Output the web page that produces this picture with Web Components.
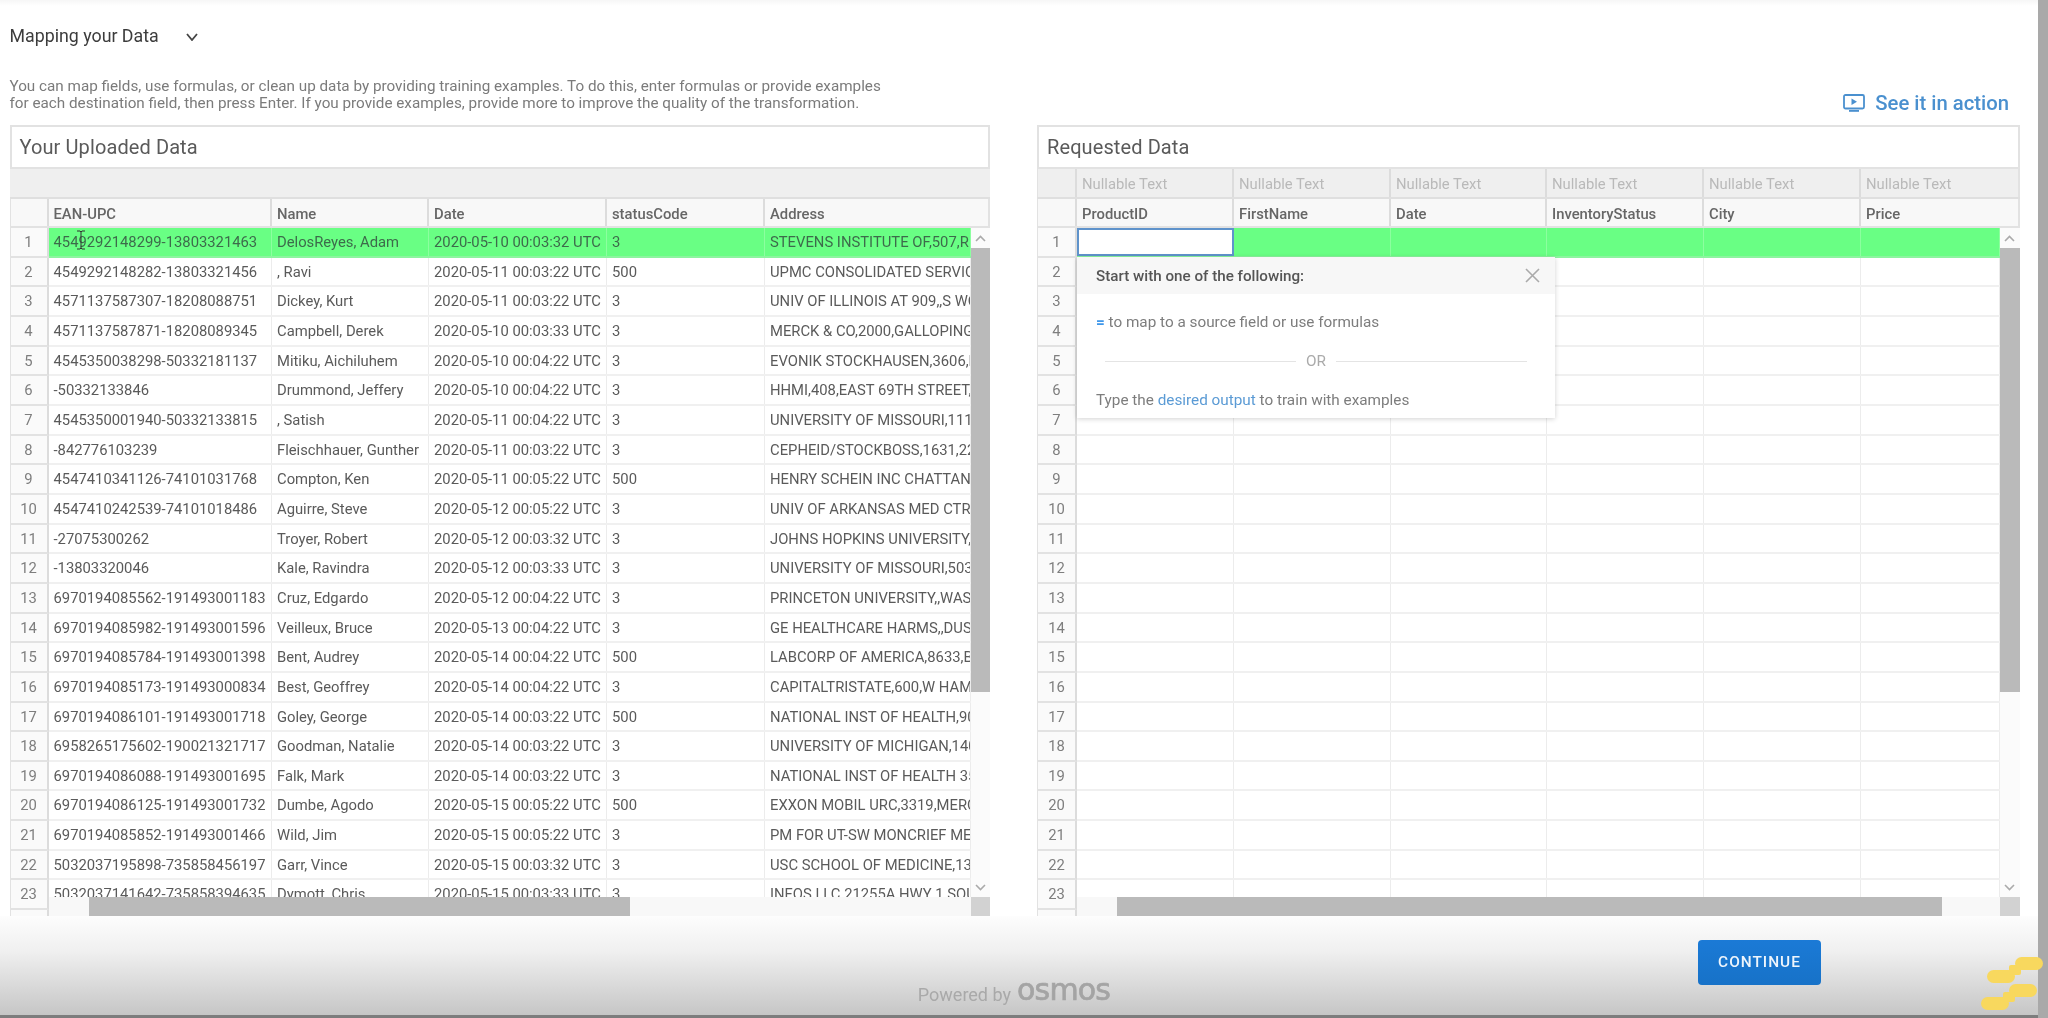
<!DOCTYPE html>
<html><head><meta charset="utf-8"><title>Mapping your Data</title>
<style>
html,body{margin:0;padding:0;background:#fff;font-family:Roboto,"Liberation Sans",sans-serif;overflow:hidden}
</style></head><body>
<x-app>
  <x-page-head slot="head"></x-page-head>
  <x-grid title-text="Your Uploaded Data" source="uploaded" slot="left"></x-grid>
  <x-grid title-text="Requested Data" source="requested" slot="right"><x-hint></x-hint></x-grid>
  <x-foot slot="foot"></x-foot>
</x-app>
<script>
const UPLOADED={
 head:["EAN-UPC","Name","Date","statusCode","Address"],
 widths:[223.5,157,178,158,0],
 num:39,bar:19,thumbV:444,thumbH:[40,541],
 rows:[
 ["4549292148299-13803321463","DelosReyes, Adam","2020-05-10 00:03:32 UTC","3","STEVENS INSTITUTE OF,507,R"],
 ["4549292148282-13803321456",", Ravi","2020-05-11 00:03:22 UTC","500","UPMC CONSOLIDATED SERVICES"],
 ["4571137587307-18208088751","Dickey, Kurt","2020-05-11 00:03:22 UTC","3","UNIV OF ILLINOIS AT 909,,S WOOD"],
 ["4571137587871-18208089345","Campbell, Derek","2020-05-10 00:03:33 UTC","3","MERCK & CO,2000,GALLOPING"],
 ["4545350038298-50332181137","Mitiku, Aichiluhem","2020-05-10 00:04:22 UTC","3","EVONIK STOCKHAUSEN,3606,HWY"],
 ["-50332133846","Drummond, Jeffery","2020-05-10 00:04:22 UTC","3","HHMI,408,EAST 69TH STREET,NY"],
 ["4545350001940-50332133815",", Satish","2020-05-11 00:04:22 UTC","3","UNIVERSITY OF MISSOURI,1111"],
 ["-842776103239","Fleischhauer, Gunther","2020-05-11 00:03:22 UTC","3","CEPHEID/STOCKBOSS,1631,22ND"],
 ["4547410341126-74101031768","Compton, Ken","2020-05-11 00:05:22 UTC","500","HENRY SCHEIN INC CHATTAN"],
 ["4547410242539-74101018486","Aguirre, Steve","2020-05-12 00:05:22 UTC","3","UNIV OF ARKANSAS MED CTR"],
 ["-27075300262","Troyer, Robert","2020-05-12 00:03:32 UTC","3","JOHNS HOPKINS UNIVERSITY,"],
 ["-13803320046","Kale, Ravindra","2020-05-12 00:03:33 UTC","3","UNIVERSITY OF MISSOURI,503"],
 ["6970194085562-191493001183","Cruz, Edgardo","2020-05-12 00:04:22 UTC","3","PRINCETON UNIVERSITY,,WAS"],
 ["6970194085982-191493001596","Veilleux, Bruce","2020-05-13 00:04:22 UTC","3","GE HEALTHCARE HARMS,,DUS"],
 ["6970194085784-191493001398","Bent, Audrey","2020-05-14 00:04:22 UTC","500","LABCORP OF AMERICA,8633,BY"],
 ["6970194085173-191493000834","Best, Geoffrey","2020-05-14 00:04:22 UTC","3","CAPITALTRISTATE,600,W HAM"],
 ["6970194086101-191493001718","Goley, George","2020-05-14 00:03:22 UTC","500","NATIONAL INST OF HEALTH,900"],
 ["6958265175602-190021321717","Goodman, Natalie","2020-05-14 00:03:22 UTC","3","UNIVERSITY OF MICHIGAN,1400"],
 ["6970194086088-191493001695","Falk, Mark","2020-05-14 00:03:22 UTC","3","NATIONAL INST OF HEALTH 35"],
 ["6970194086125-191493001732","Dumbe, Agodo","2020-05-15 00:05:22 UTC","500","EXXON MOBIL URC,3319,MERCK"],
 ["6970194085852-191493001466","Wild, Jim","2020-05-15 00:05:22 UTC","3","PM FOR UT-SW MONCRIEF ME"],
 ["5032037195898-735858456197","Garr, Vince","2020-05-15 00:03:32 UTC","3","USC SCHOOL OF MEDICINE,13"],
 ["5032037141642-735858394635","Dymott, Chris","2020-05-15 00:03:33 UTC","3","INFOS LLC 21255A HWY 1 SOUTH"],
 ["","","","",""]
 ]
};
const REQUESTED={
 types:["Nullable Text","Nullable Text","Nullable Text","Nullable Text","Nullable Text","Nullable Text"],
 head:["ProductID","FirstName","Date","InventoryStatus","City","Price"],
 widths:[157,157,156,157,157,0],
 num:40,bar:20,thumbV:444,thumbH:[40,825],active:0,
 rows:Array.from({length:24},()=>["","","","","",""])
};
const SOURCES={uploaded:UPLOADED,requested:REQUESTED};
const esc=s=>s.replace(/&/g,"&amp;").replace(/</g,"&lt;");

customElements.define("x-app",class extends HTMLElement{
 constructor(){super();this.attachShadow({mode:"open"}).innerHTML=`<style>
 :host{display:grid;grid-template-columns:2038px 10px;grid-template-rows:1015px 3px;width:2048px;height:1018px;overflow:hidden;filter:blur(.45px)}
 .main{display:flex;flex-direction:column;background:#fff;min-height:0;position:relative}
 .top{position:absolute;left:0;right:0;top:0;height:6px;background:linear-gradient(#f6f6f6,#fff)}
 .panels{display:flex;gap:47px;padding:0 18.500px 0 9.500px;height:791px}
 .panels ::slotted([slot=left]){flex:0 0 980.500px;min-width:0}
 .panels ::slotted([slot=right]){flex:1 1 0;min-width:0}
 .strip{background:#a9a9a9;grid-row:1/3;grid-column:2}
 .bot{background:#7d7d7d}
 </style>
 <div class="main"><div class="top"></div><slot name="head"></slot>
 <div class="panels"><slot name="left"></slot><slot name="right"></slot></div>
 <slot name="foot"></slot></div><div class="strip"></div><div class="bot"></div>`}
});

customElements.define("x-page-head",class extends HTMLElement{
 constructor(){super();this.attachShadow({mode:"open"}).innerHTML=`<style>
 :host{display:block;height:125px;padding:0 29px 0 9.500px;box-sizing:border-box}
 h1{margin:0;padding-top:25px;font:400 17.800px/22px Roboto,sans-serif;color:#3c3c3c;display:flex;align-items:center;gap:27px;height:47px;box-sizing:border-box}
 h1 svg{display:block;margin-top:2px}
 .row{display:flex;justify-content:space-between;align-items:flex-end;margin-top:31px}
 p{margin:0;font:400 15.250px/17px Roboto,sans-serif;color:#7b7b7b}
 a{display:flex;align-items:center;gap:10px;color:#4a90cf;font:500 20.300px/22px Roboto,sans-serif;text-decoration:none;margin-bottom:-2px}
 </style>
 <h1><span>Mapping your Data</span><svg width="12" height="8" viewBox="0 0 12 8"><polyline points="1,1 6,7 11,1" fill="none" stroke="#444" stroke-width="1.8"/></svg></h1>
 <div class="row"><p>You can map fields, use formulas, or clean up data by providing training examples. To do this, enter formulas or provide examples<br>for each destination field, then press Enter. If you provide examples, provide more to improve the quality of the transformation.</p>
 <a href="#"><svg width="22" height="18" viewBox="0 0 22 18"><rect x="1" y="1" width="20" height="13.5" rx="1.5" fill="none" stroke="#4a90cf" stroke-width="1.8"/><path d="M8.5 4.5v6.5l5.5-3.2z" fill="#4a90cf"/><rect x="6" y="16" width="10" height="1.8" fill="#4a90cf"/></svg><span>See it in action</span></a></div>`}
});

customElements.define("x-grid",class extends HTMLElement{
 connectedCallback(){
  if(this.shadowRoot)return;
  const d=SOURCES[this.getAttribute("source")];
  const cols=d.widths.map(w=>w?`flex:0 0 ${w}px;width:${w}px`:"flex:1 1 0;min-width:0");
  const cells=(arr,cls)=>arr.map((t,i)=>`<div class="c ${cls||""}" style="${cols[i]}">${esc(t)}</div>`).join("");
  const band=d.types?`<div class="hr band"><div class="n"></div>${cells(d.types,"ty")}</div>`:`<div class="hr band"></div>`;
  const nums=d.rows.map((_,i)=>`<div class="rn">${i+1}</div>`).join("");
  const rows=d.rows.map((r,i)=>`<div class="r ${i==0?"sel":""}">${r.map((t,j)=>`<div class="c ${i==0&&j===d.active?"act":""}" style="${cols[j]}">${esc(t)}</div>`).join("")}</div>`).join("");
  const up=`<svg width="11" height="7" viewBox="0 0 11 7"><polyline points="1,6 5.5,1.5 10,6" fill="none" stroke="#aaa" stroke-width="1.6"/></svg>`;
  const dn=`<svg width="11" height="7" viewBox="0 0 11 7"><polyline points="1,1 5.5,5.5 10,1" fill="none" stroke="#aaa" stroke-width="1.6"/></svg>`;
  this.attachShadow({mode:"open"}).innerHTML=`<style>
  :host{display:flex;flex-direction:column;position:relative;font:400 14.8px/20px Roboto,sans-serif;color:#5a5a5a}
  .t{flex:0 0 44px;box-sizing:border-box;border:2px solid #e2e2e2;background:#fff;font-size:20px;padding-top:1px;line-height:39px;padding-left:8px;color:#5a5a5a;letter-spacing:.1px}
  .hr{display:flex;flex:0 0 auto;box-sizing:border-box}
  .band{height:30px;background:#efefef;border-bottom:2px solid #dfdfdf;color:#b9b9b9}
  .hd{height:29px;background:#f8f8f8;border-bottom:2px solid #e2e2e2;font-weight:500;color:#666}
  .n{flex:0 0 ${d.num}px;box-sizing:border-box;border-left:1px solid #e2e2e2;border-right:2px solid #dcdcdc}
  .hr .c{border-right:2px solid #dcdcdc}
  .band .c{padding-top:3px;line-height:25px}
  .hd .c{padding-top:3px;line-height:24px}
  .hr .c:last-child{border-right:2px solid #e2e2e2}
  .c{box-sizing:border-box;padding:2px 0 0 5px;white-space:nowrap;overflow:hidden;border-right:1px solid #ececec;line-height:25.600px}
  .body{flex:1 1 0;min-height:0;display:grid;grid-template-columns:${d.num}px 1fr ${d.bar}px;grid-template-rows:1fr 19px}
  .nums{grid-row:1/3;overflow:hidden;background:#fafafa}
  .rn{height:29.66px;box-sizing:border-box;text-align:center;padding-top:2px;line-height:25.600px;color:#7e7e7e;border-left:1px solid #e2e2e2;border-right:2px solid #dcdcdc;border-bottom:2px solid #e2e2e2}
  .pane{overflow:hidden;background:#fff;min-width:0}
  .r{display:flex;height:29.66px;box-sizing:border-box;border-bottom:2px solid #f0f0f0}
  .sel{background:#69ff84;color:#3d6b4b;border-bottom-color:#8cf59f}
  .sel .c{border-right-color:#8cff9f}
  .act{background:#fff;box-shadow:inset 0 0 0 2px #5f93cb;border-right:0}
  .v{background:#fbfbfb;display:flex;flex-direction:column;align-items:center}
  .v .a{flex:0 0 20px;display:flex;align-items:center;justify-content:center;width:100%}
  .v .th{flex:0 0 ${d.thumbV}px;width:100%;background:#bababa}
  .v .sp{flex:1}
  .h{background:#f8f8f8;padding-left:${d.thumbH[0]}px}
  .h div{width:${d.thumbH[1]}px;height:100%;background:#bababa}
  .k{background:#d2d2d2}
  .ov{position:absolute;left:${d.num}px;top:132px}
  .cur{position:absolute;left:66px;top:105px}
  </style>
  <div class="t">${esc(this.getAttribute("title-text"))}</div>
  ${band}
  <div class="hr hd"><div class="n"></div>${cells(d.head)}</div>
  <div class="body"><div class="nums">${nums}</div><div class="pane">${rows}</div>
  <div class="v"><div class="a">${up}</div><div class="th"></div><div class="sp"></div><div class="a">${dn}</div></div>
  <div class="h"><div></div></div><div class="k"></div></div>
  <div class="ov"><slot></slot></div>
  ${d.types?"":`<svg class="cur" width="10" height="20" viewBox="0 0 10 20"><path d="M1 1h3l1 1 1-1h3M5 2v16M1 19h3l1-1 1 1h3" fill="none" stroke="#333" stroke-width="1"/></svg>`}`;
 }
});

customElements.define("x-hint",class extends HTMLElement{
 constructor(){super();this.attachShadow({mode:"open"}).innerHTML=`<style>
 :host{display:block;width:478px;height:161px;background:#fff;box-shadow:0 1px 5px rgba(0,0,0,.18);font:400 15.300px/20px Roboto,sans-serif;color:#7d7d7d}
 .h{height:37px;background:#f7f7f7;display:flex;align-items:center;justify-content:space-between;padding:0 15px 0 19px;font-weight:500;font-size:15.200px;color:#555}
 .b{padding:18px 19px 0}
 .b p{margin:0}
 i{font-style:normal;color:#5b9bd5}
 i.eq{color:#3f97ea;font-weight:700}
 .or{display:flex;align-items:center;gap:10px;margin:19px 9px 19px;color:#aaa}
 .or:before,.or:after{content:"";flex:1;height:1px;background:#e4e4e4}
 </style>
 <div class="h"><span>Start with one of the following:</span><svg width="15" height="15" viewBox="0 0 15 15"><path d="M1 1l13 13M14 1L1 14" stroke="#aaa" stroke-width="1.6" fill="none"/></svg></div>
 <div class="b"><p><i class="eq">=</i> to map to a source field or use formulas</p>
 <div class="or"><span>OR</span></div>
 <p>Type the <i>desired output</i> to train with examples</p></div>`}
});

customElements.define("x-foot",class extends HTMLElement{
 constructor(){super();this.attachShadow({mode:"open"}).innerHTML=`<style>
 :host{display:grid;grid-template-columns:1fr auto 1fr;height:99px;background:linear-gradient(#fdfdfd,#f0f0f0 35%,#c6c6c6);position:relative}
 .p{grid-column:2;display:flex;align-items:center;gap:6px;align-self:end;padding-bottom:8px;color:#a9a9a9;font:400 18px/24px Roboto,sans-serif;transform:translateX(-5px)}
 .w{font:400 30px/24px "DejaVu Sans",sans-serif;color:#a4a4a4;letter-spacing:-.8px;-webkit-text-stroke:.7px #a4a4a4;position:relative;top:-5px}
 .r{grid-column:3;display:flex;justify-content:flex-end;padding:24px 217px 0 0;align-items:flex-start}
 button{height:45px;width:123px;border:0;border-radius:4px;background:linear-gradient(#1b7ad6,#1772c8);color:#eef5fc;font:500 15.400px/45px Roboto,sans-serif;letter-spacing:1px;padding:0}
 svg{position:absolute;left:1981px;top:41px}
 </style>
 <div class="p"><span>Powered by</span><span class="w">osmos</span></div>
 <div class="r"><button>CONTINUE</button></div>
 <svg width="62" height="53" viewBox="0 0 62 53" fill="#f8d85e"><rect x="34" y="0" width="28" height="13" rx="6.500"/><rect x="6" y="13" width="28" height="13" rx="6.500"/><rect x="28" y="8" width="12" height="10" rx="2"/><rect x="28" y="27" width="28" height="13" rx="6.500"/><rect x="0" y="40" width="28" height="13" rx="6.500"/><rect x="22" y="35" width="12" height="10" rx="2"/></svg>`}
});
</script>
</body></html>
